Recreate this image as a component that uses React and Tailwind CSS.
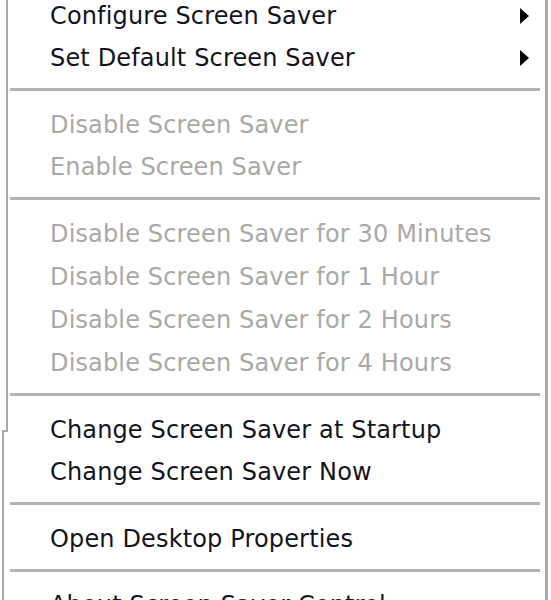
import React from "react";

const Arrow = () => (
  <svg width="9" height="16" viewBox="0 0 9 16" className="block">
    <polygon points="0,0 9,8 0,16" fill="#000" />
  </svg>
);

const Row = ({ label, disabled, sub, tall }) => (
  <div
    className={
      (tall ? "h-[43px]" : "h-[42.5px]") +
      " flex items-center justify-between pl-[42px] pr-[16px] pb-[1px]"
    }
  >
    <span className={disabled ? "text-[#a9a9a6]" : "text-[#141420]"}>{label}</span>
    {sub ? <Arrow /> : null}
  </div>
);

const Sep = () => (
  <div className="h-[24px] pt-[8px] pl-[2px] pr-[5px]">
    <div className="h-[3px] bg-[#b4b4b0]" />
  </div>
);

export default function App() {
  return (
    <div
      className="w-[551px] h-[600px] overflow-hidden bg-white flex text-[24px] tracking-[0.15px]"
      style={{ fontFamily: '"DejaVu Sans", Tahoma, sans-serif' }}
    >
      <div className="w-[8px] flex flex-col shrink-0">
        <div className="h-[430px] border-r-2 border-[#a7a7a3]" />
        <div className="h-[2px] ml-[2px] bg-[#a7a7a3]" />
        <div className="flex-1 w-[4px] border-r-2 border-[#a7a7a3]" />
      </div>
      <div className="flex-1 -mt-[5px] border-r-[3px] border-[#a9a8a2] mr-[3px]">
        <Row label="Configure Screen Saver" sub />
        <Row label="Set Default Screen Saver" sub />
        <Sep />
        <Row label="Disable Screen Saver" disabled />
        <Row label="Enable Screen Saver" disabled />
        <Sep />
        <Row label="Disable Screen Saver for 30 Minutes" disabled tall />
        <Row label="Disable Screen Saver for 1 Hour" disabled tall />
        <Row label="Disable Screen Saver for 2 Hours" disabled tall />
        <Row label="Disable Screen Saver for 4 Hours" disabled tall />
        <Sep />
        <Row label="Change Screen Saver at Startup" />
        <Row label="Change Screen Saver Now" />
        <Sep />
        <Row label="Open Desktop Properties" />
        <Sep />
        <Row label="About Screen Saver Control" />
      </div>
    </div>
  );
}
